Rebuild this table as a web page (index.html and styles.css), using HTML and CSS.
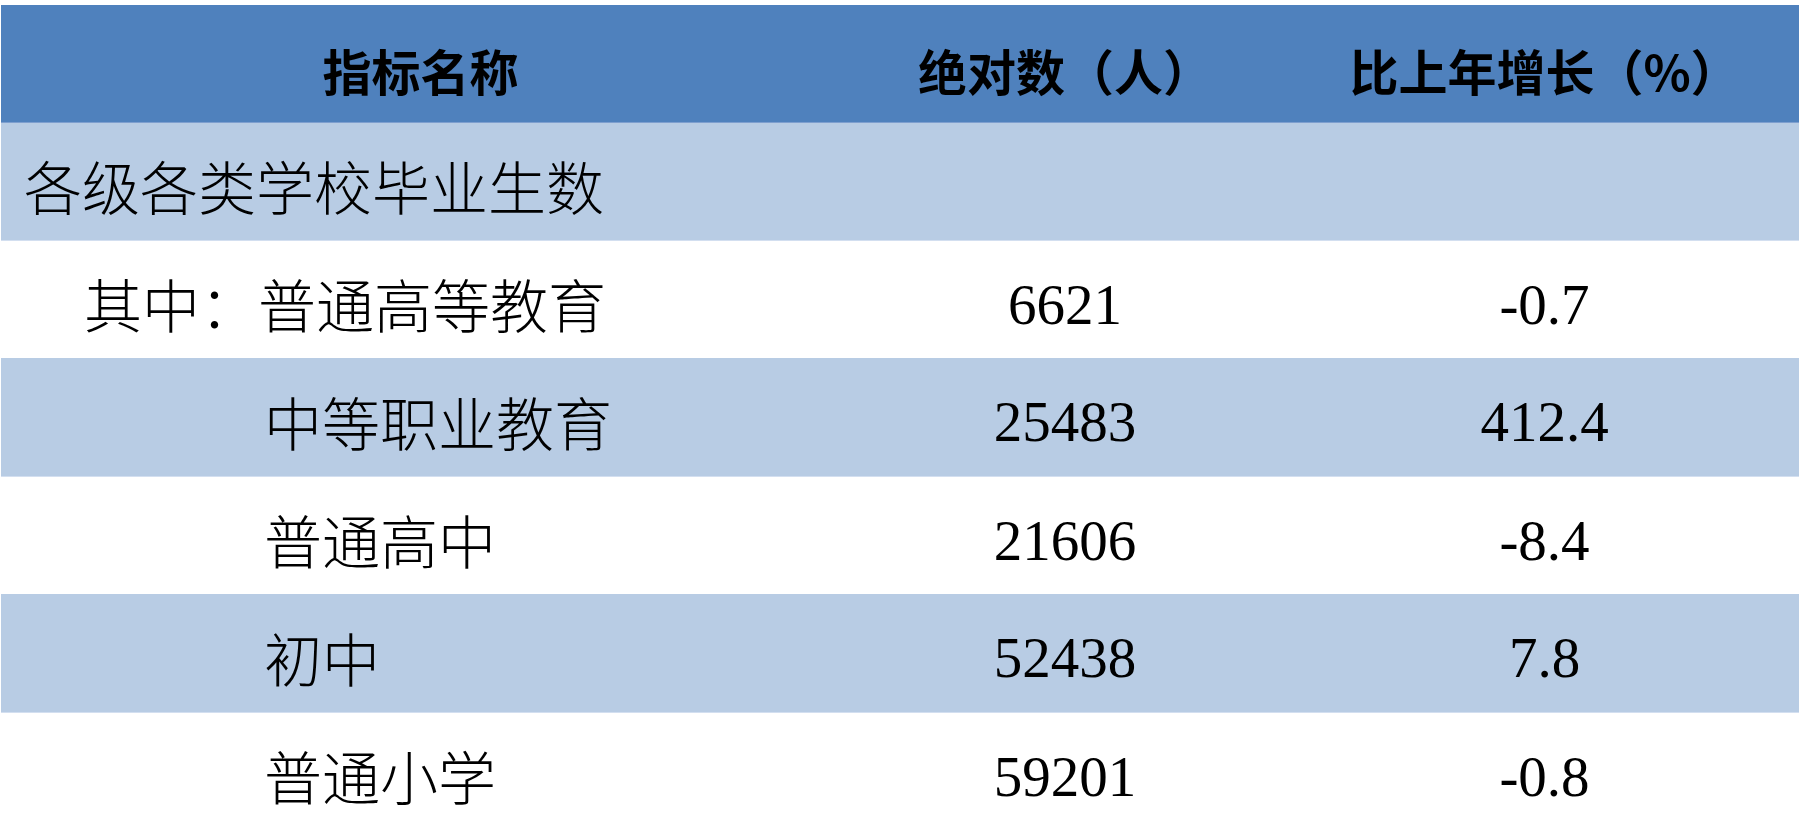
FILE: index.html
```html
<!DOCTYPE html>
<html lang="zh-CN">
<head>
<meta charset="utf-8">
<title>各级各类学校毕业生数</title>
<link rel="stylesheet" href="styles.css">
</head>
<body>
<table class="stats">
  <colgroup>
    <col class="c-name">
    <col class="c-abs">
    <col class="c-pct">
  </colgroup>
  <thead>
    <tr class="head">
      <th class="name-h">指标名称</th>
      <th>绝对数（人）</th>
      <th>比上年增长（%）</th>
    </tr>
  </thead>
  <tbody>
    <tr class="band">
      <td class="name lvl0">各级各类学校毕业生数</td>
      <td class="num"></td>
      <td class="num"></td>
    </tr>
    <tr>
      <td class="name lvl1">其中：普通高等教育</td>
      <td class="num">6621</td>
      <td class="num">-0.7</td>
    </tr>
    <tr class="band">
      <td class="name lvl2">中等职业教育</td>
      <td class="num">25483</td>
      <td class="num">412.4</td>
    </tr>
    <tr>
      <td class="name lvl2">普通高中</td>
      <td class="num">21606</td>
      <td class="num">-8.4</td>
    </tr>
    <tr class="band">
      <td class="name lvl2">初中</td>
      <td class="num">52438</td>
      <td class="num">7.8</td>
    </tr>
    <tr>
      <td class="name lvl2">普通小学</td>
      <td class="num">59201</td>
      <td class="num">-0.8</td>
    </tr>
  </tbody>
</table>
</body>
</html>
```
FILE: styles.css
```css
html, body {
  margin: 0;
  padding: 0;
  background: #ffffff;
  overflow: hidden;
}

body {
  padding: 5px 0 0 1px;
}

.stats {
  width: 1798px;
  table-layout: fixed;
  border-collapse: collapse;
  border-spacing: 0;
  color: #000000;
}

.c-name { width: 839px; }
.c-abs { width: 450px; }
.c-pct { width: 509px; }

.stats th,
.stats td {
  padding: 0;
  vertical-align: middle;
}

.head {
  background: #4f81bd;
  height: 117px;
}

.head th {
  font-family: "Noto Sans CJK SC", "Noto Sans", sans-serif;
  font-weight: 700;
  font-size: 49px;
  line-height: 1;
  text-align: center;
  padding-top: 12px;
  border-bottom: 1px solid #7e9fcf;
}

tbody tr {
  height: 118px;
}

.band {
  background: #b8cce4;
}

.band td {
  border-bottom: 1px solid #d3dff0;
}

.name {
  font-family: "Noto Sans CJK SC", "Noto Sans", sans-serif;
  font-weight: 300;
  font-size: 58px;
  line-height: 1;
  text-align: left;
  white-space: nowrap;
  padding-top: 8px !important;
}

.lvl0 { padding-left: 23px !important; }
.lvl1 { padding-left: 83px !important; }
.lvl2 { padding-left: 263px !important; }

.num {
  font-family: "Liberation Serif", "Times New Roman", serif;
  font-size: 57px;
  line-height: 1;
  text-align: center;
  padding-top: 10px !important;
}
```
